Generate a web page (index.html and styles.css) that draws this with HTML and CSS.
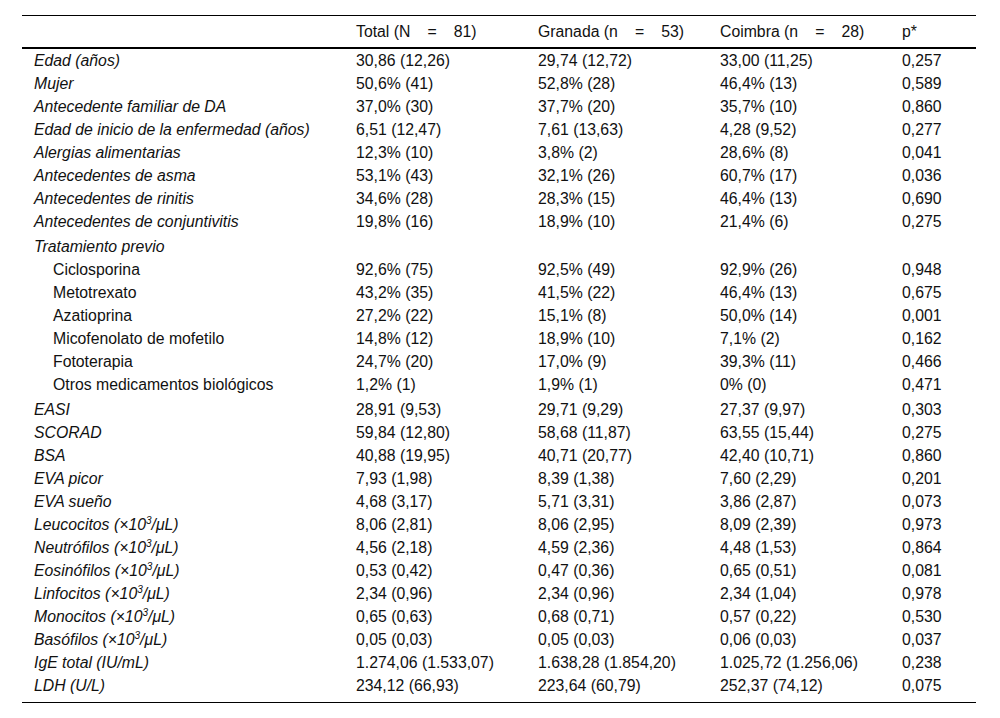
FILE: index.html
```html
<!DOCTYPE html>
<html lang="es">
<head>
<meta charset="utf-8">
<title>Tabla</title>
<link rel="stylesheet" href="styles.css">
</head>
<body>
<div class="wrap">
<table class="data">
<colgroup>
<col class="c-label"><col class="c-num"><col class="c-num"><col class="c-num"><col class="c-p">
</colgroup>
<thead>
<tr><th></th><th>Total (N<span class="eq">=</span>81)</th><th>Granada (n<span class="eq">=</span>53)</th><th>Coimbra (n<span class="eq">=</span>28)</th><th>p*</th></tr>
</thead>
<tbody>
<tr><td class="lbl">Edad (años)</td><td>30,86 (12,26)</td><td>29,74 (12,72)</td><td>33,00 (11,25)</td><td>0,257</td></tr>
<tr><td class="lbl">Mujer</td><td>50,6% (41)</td><td>52,8% (28)</td><td>46,4% (13)</td><td>0,589</td></tr>
<tr><td class="lbl">Antecedente familiar de DA</td><td>37,0% (30)</td><td>37,7% (20)</td><td>35,7% (10)</td><td>0,860</td></tr>
<tr><td class="lbl">Edad de inicio de la enfermedad (años)</td><td>6,51 (12,47)</td><td>7,61 (13,63)</td><td>4,28 (9,52)</td><td>0,277</td></tr>
<tr><td class="lbl">Alergias alimentarias</td><td>12,3% (10)</td><td>3,8% (2)</td><td>28,6% (8)</td><td>0,041</td></tr>
<tr><td class="lbl">Antecedentes de asma</td><td>53,1% (43)</td><td>32,1% (26)</td><td>60,7% (17)</td><td>0,036</td></tr>
<tr><td class="lbl">Antecedentes de rinitis</td><td>34,6% (28)</td><td>28,3% (15)</td><td>46,4% (13)</td><td>0,690</td></tr>
<tr><td class="lbl">Antecedentes de conjuntivitis</td><td>19,8% (16)</td><td>18,9% (10)</td><td>21,4% (6)</td><td>0,275</td></tr>
<tr class="gap"><td class="lbl">Tratamiento previo</td><td></td><td></td><td></td><td></td></tr>
<tr><td class="sub">Ciclosporina</td><td>92,6% (75)</td><td>92,5% (49)</td><td>92,9% (26)</td><td>0,948</td></tr>
<tr><td class="sub">Metotrexato</td><td>43,2% (35)</td><td>41,5% (22)</td><td>46,4% (13)</td><td>0,675</td></tr>
<tr><td class="sub">Azatioprina</td><td>27,2% (22)</td><td>15,1% (8)</td><td>50,0% (14)</td><td>0,001</td></tr>
<tr><td class="sub">Micofenolato de mofetilo</td><td>14,8% (12)</td><td>18,9% (10)</td><td>7,1% (2)</td><td>0,162</td></tr>
<tr><td class="sub">Fototerapia</td><td>24,7% (20)</td><td>17,0% (9)</td><td>39,3% (11)</td><td>0,466</td></tr>
<tr><td class="sub">Otros medicamentos biológicos</td><td>1,2% (1)</td><td>1,9% (1)</td><td>0% (0)</td><td>0,471</td></tr>
<tr class="gap"><td class="lbl">EASI</td><td>28,91 (9,53)</td><td>29,71 (9,29)</td><td>27,37 (9,97)</td><td>0,303</td></tr>
<tr><td class="lbl">SCORAD</td><td>59,84 (12,80)</td><td>58,68 (11,87)</td><td>63,55 (15,44)</td><td>0,275</td></tr>
<tr><td class="lbl">BSA</td><td>40,88 (19,95)</td><td>40,71 (20,77)</td><td>42,40 (10,71)</td><td>0,860</td></tr>
<tr><td class="lbl">EVA picor</td><td>7,93 (1,98)</td><td>8,39 (1,38)</td><td>7,60 (2,29)</td><td>0,201</td></tr>
<tr><td class="lbl">EVA sueño</td><td>4,68 (3,17)</td><td>5,71 (3,31)</td><td>3,86 (2,87)</td><td>0,073</td></tr>
<tr><td class="lbl">Leucocitos (×10<sup>3</sup>/μL)</td><td>8,06 (2,81)</td><td>8,06 (2,95)</td><td>8,09 (2,39)</td><td>0,973</td></tr>
<tr><td class="lbl">Neutrófilos (×10<sup>3</sup>/μL)</td><td>4,56 (2,18)</td><td>4,59 (2,36)</td><td>4,48 (1,53)</td><td>0,864</td></tr>
<tr><td class="lbl">Eosinófilos (×10<sup>3</sup>/μL)</td><td>0,53 (0,42)</td><td>0,47 (0,36)</td><td>0,65 (0,51)</td><td>0,081</td></tr>
<tr><td class="lbl">Linfocitos (×10<sup>3</sup>/μL)</td><td>2,34 (0,96)</td><td>2,34 (0,96)</td><td>2,34 (1,04)</td><td>0,978</td></tr>
<tr><td class="lbl">Monocitos (×10<sup>3</sup>/μL)</td><td>0,65 (0,63)</td><td>0,68 (0,71)</td><td>0,57 (0,22)</td><td>0,530</td></tr>
<tr><td class="lbl">Basófilos (×10<sup>3</sup>/μL)</td><td>0,05 (0,03)</td><td>0,05 (0,03)</td><td>0,06 (0,03)</td><td>0,037</td></tr>
<tr><td class="lbl">IgE total (IU/mL)</td><td>1.274,06 (1.533,07)</td><td>1.638,28 (1.854,20)</td><td>1.025,72 (1.256,06)</td><td>0,238</td></tr>
<tr class="last"><td class="lbl">LDH (U/L)</td><td>234,12 (66,93)</td><td>223,64 (60,79)</td><td>252,37 (74,12)</td><td>0,075</td></tr>
</tbody>
</table>
</div>
</body>
</html>
```
FILE: styles.css
```css
html, body {
  margin: 0;
  padding: 0;
  background: #fff;
}
body {
  font-family: "Liberation Sans", Arial, sans-serif;
  font-size: 15.8px;
  color: #111;
}
.wrap {
  padding: 15px 24px 0 22px;
}
.data {
  width: 954px;
  border-collapse: collapse;
  table-layout: fixed;
}
.c-label { width: 322px; }
.c-num { width: 182px; }
.c-p { width: 86px; }
.data thead tr {
  border-top: 1px solid #000;
  border-bottom: 2px solid #000;
}
.data th {
  font-weight: normal;
  text-align: left;
  height: 31px;
  padding: 0 12px;
  line-height: 17px;
  vertical-align: middle;
  white-space: nowrap;
}
.eq {
  margin: 0 17px;
}
.data td {
  height: 23px;
  padding: 0 12px;
  line-height: 17px;
  vertical-align: middle;
  white-space: nowrap;
}
.data td.lbl {
  font-style: italic;
}
.data td.sub {
  padding-left: 31px;
}
.data tr.gap td {
  height: 25px;
  padding-top: 2px;
  box-sizing: border-box;
}
.data tr.last {
  border-bottom: 1px solid #000;
}
.data tr.last td {
  height: 28px;
  padding-bottom: 5px;
  box-sizing: border-box;
}
sup {
  font-size: 10px;
  line-height: 0;
  vertical-align: 6px;
}
```
